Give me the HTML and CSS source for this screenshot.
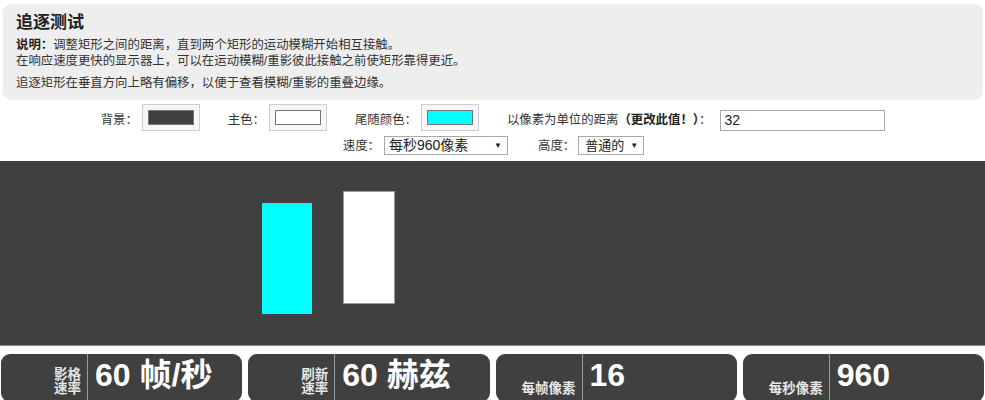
FILE: index.html
```html
<!DOCTYPE html>
<html lang="zh-CN">
<head>
<meta charset="utf-8">
<title>追逐测试</title>
<link rel="stylesheet" href="styles.css">
</head>
<body>
<div class="info">
  <h1 class="title">追逐测试</h1>
  <p class="para"><b>说明：</b>调整矩形之间的距离，直到两个矩形的运动模糊开始相互接触。<br>在响应速度更快的显示器上，可以在运动模糊/重影彼此接触之前使矩形靠得更近。</p>
  <p class="para">追逐矩形在垂直方向上略有偏移，以便于查看模糊/重影的重叠边缘。</p>
</div>
<div class="controls">
  <div class="row row-top">
    <div class="group"><span class="lbl">背景：</span><span class="swatch"><span class="swatch-fill fill-bg"></span></span></div>
    <div class="group"><span class="lbl">主色：</span><span class="swatch"><span class="swatch-fill fill-main"></span></span></div>
    <div class="group"><span class="lbl">尾随颜色：</span><span class="swatch"><span class="swatch-fill fill-trail"></span></span></div>
    <div class="group"><span class="lbl">以像素为单位的距离<b>（更改此值！）</b>：</span><span class="textbox">32</span></div>
  </div>
  <div class="row row-bottom">
    <div class="group"><span class="lbl">速度：</span><span class="select select-speed"><span class="sel-text">每秒960像素</span><span class="arrow">▼</span></span></div>
    <div class="group"><span class="lbl">高度：</span><span class="select select-height"><span class="sel-text sel-small">普通的</span><span class="arrow">▼</span></span></div>
  </div>
</div>
<div class="canvas">
  <div class="rect rect-trail"></div>
  <div class="rect rect-main"></div>
</div>
<div class="stats">
  <div class="stat"><div class="stat-label"><span class="ln">影格</span><span class="ln">速率</span></div><div class="stat-value">60 帧/秒</div></div>
  <div class="stat"><div class="stat-label"><span class="ln">刷新</span><span class="ln">速率</span></div><div class="stat-value">60 赫兹</div></div>
  <div class="stat"><div class="stat-label"><span class="ln">每帧像素</span></div><div class="stat-value">16</div></div>
  <div class="stat"><div class="stat-label"><span class="ln">每秒像素</span></div><div class="stat-value">960</div></div>
</div>
</body>
</html>
```
FILE: styles.css
```css
html, body {
  margin: 0;
  padding: 0;
  background: #ffffff;
}
body {
  font-family: "Liberation Sans", "Noto Sans CJK SC", sans-serif;
  color: #333333;
  width: 985px;
  height: 400px;
  overflow: hidden;
}
.info {
  margin: 4px 2px 0 3px;
  padding: 8px 13px 8px 13px;
  background: #eeeeee;
  border-radius: 8px;
  box-shadow: 0 1px 1px rgba(0, 0, 0, 0.06);
}
.title {
  margin: 0;
  font-size: 17px;
  line-height: 22px;
  font-weight: bold;
  color: #222222;
}
.para {
  margin: 3px 0 0 0;
  font-size: 12.4px;
  line-height: 16px;
  color: #333333;
}
.para + .para {
  margin-top: 6px;
}
.para b {
  color: #222222;
}
.controls {
  margin-top: 4px;
}
.row {
  display: flex;
  justify-content: center;
  align-items: center;
}
.row-top {
  height: 28px;
  gap: 28px;
  padding-left: 1px;
}
.row-bottom {
  margin-top: 5px;
  height: 19px;
  gap: 30px;
  padding-left: 2px;
}
.group {
  display: flex;
  align-items: center;
  gap: 4px;
}
.lbl {
  font-size: 12.4px;
  line-height: 16px;
  color: #333333;
}
.lbl b {
  color: #222222;
}
.row-top .lbl {
  margin-top: 6px;
}
.swatch {
  box-sizing: border-box;
  width: 58px;
  height: 27px;
  border: 1px solid #cfcfcf;
  background: #f6f6f6;
  display: flex;
  align-items: center;
  justify-content: center;
}
.swatch-fill {
  box-sizing: border-box;
  width: 46px;
  height: 15px;
  border: 1px solid #777777;
}
.fill-bg { background: #404040; }
.fill-main { background: #ffffff; }
.fill-trail { background: #00ffff; }
.textbox {
  box-sizing: border-box;
  width: 165px;
  height: 21px;
  margin-left: 5px;
  margin-top: 7px;
  border: 1px solid #a9a9a9;
  background: #ffffff;
  font-size: 14px;
  line-height: 19px;
  padding-left: 3px;
  color: #222222;
}
.select {
  box-sizing: border-box;
  height: 19px;
  border: 1px solid #a9a9a9;
  background: #ffffff;
  display: flex;
  align-items: center;
  justify-content: space-between;
  padding: 0 5px 0 4px;
  color: #222222;
}
.select-speed { width: 124px; }
.select-height { width: 66px; margin-left: -1px; padding-left: 6px; }
.sel-text {
  font-size: 14px;
  line-height: 17px;
}
.sel-small {
  font-size: 13px;
}
.arrow {
  font-size: 8px;
  line-height: 10px;
  color: #222222;
}
.canvas {
  position: relative;
  margin-top: 6px;
  height: 184px;
  background: #404040;
  border-bottom: 1px solid #8a8a8a;
}
.rect {
  position: absolute;
  width: 50px;
  height: 111px;
}
.rect-trail {
  left: 262px;
  top: 42px;
  background: #00ffff;
}
.rect-main {
  left: 344px;
  top: 31px;
  background: #ffffff;
  box-shadow: 0 0 0 1px #9a9a9a;
}
.stats {
  display: flex;
  gap: 6px;
  margin-top: 8px;
  padding: 0 1px;
}
.stat {
  flex: 1;
  height: 48px;
  display: flex;
  background: #404040;
  border-radius: 9px;
  overflow: hidden;
}
.stat-label {
  box-sizing: border-box;
  width: 87px;
  border-right: 1px solid #9a9a9a;
  display: flex;
  flex-direction: column;
  justify-content: flex-end;
  align-items: flex-end;
  text-align: right;
  padding: 0 6px 6px 0;
  font-size: 13.5px;
  font-weight: bold;
  color: #e6e6e6;
}
.ln {
  display: block;
  line-height: 14px;
  height: 14px;
}
.stat-value {
  padding: 3px 0 0 7px;
  font-size: 32px;
  line-height: 37px;
  font-weight: bold;
  color: #ffffff;
  white-space: nowrap;
}
```
